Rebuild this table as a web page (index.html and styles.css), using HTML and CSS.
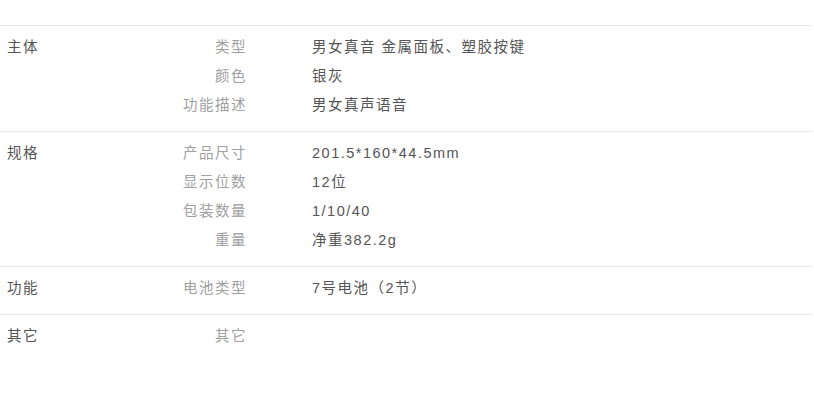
FILE: index.html
```html
<!DOCTYPE html>
<html lang="zh-CN">
<head>
<meta charset="utf-8">
<title>规格参数</title>
<link rel="stylesheet" href="styles.css">
</head>
<body>
<div id="params">

<div class="group">
 <div class="gname">主体</div>
 <div class="items">
  <div class="item"><span class="label">类型</span><span class="value">男女真音 金属面板、塑胶按键</span></div>
  <div class="item"><span class="label">颜色</span><span class="value">银灰</span></div>
  <div class="item"><span class="label">功能描述</span><span class="value">男女真声语音</span></div>
 </div>
</div>

<div class="group">
 <div class="gname">规格</div>
 <div class="items">
  <div class="item"><span class="label">产品尺寸</span><span class="value">201.5*160*44.5mm</span></div>
  <div class="item"><span class="label">显示位数</span><span class="value">12位</span></div>
  <div class="item"><span class="label">包装数量</span><span class="value">1/10/40</span></div>
  <div class="item"><span class="label">重量</span><span class="value">净重382.2g</span></div>
 </div>
</div>

<div class="group">
 <div class="gname">功能</div>
 <div class="items">
  <div class="item"><span class="label">电池类型</span><span class="value">7号电池（2节）</span></div>
 </div>
</div>

<div class="group">
 <div class="gname">其它</div>
 <div class="items">
  <div class="item"><span class="label">其它</span><span class="value"></span></div>
 </div>
</div>

</div>
</body>
</html>
```

FILE: styles.css
```css
body{margin:0px;padding:0px;background-color:#ffffff;font-family:"Liberation Sans","Noto Sans CJK SC",sans-serif;font-size:14.5px;letter-spacing:1.5px;}
#params{margin-top:25px;width:812px;}
.group{display:flex;padding:7px 0px 11px 0px;border-top:1px solid #e8e8e8;line-height:29px;}
.gname{width:140px;padding-left:7px;box-sizing:border-box;color:#555555;}
.items{display:flex;flex-direction:column;}
.item{display:flex;height:29px;}
.label{width:107px;text-align:right;color:#a0a0a0;}
.value{margin-left:65px;color:#555555;}
```
